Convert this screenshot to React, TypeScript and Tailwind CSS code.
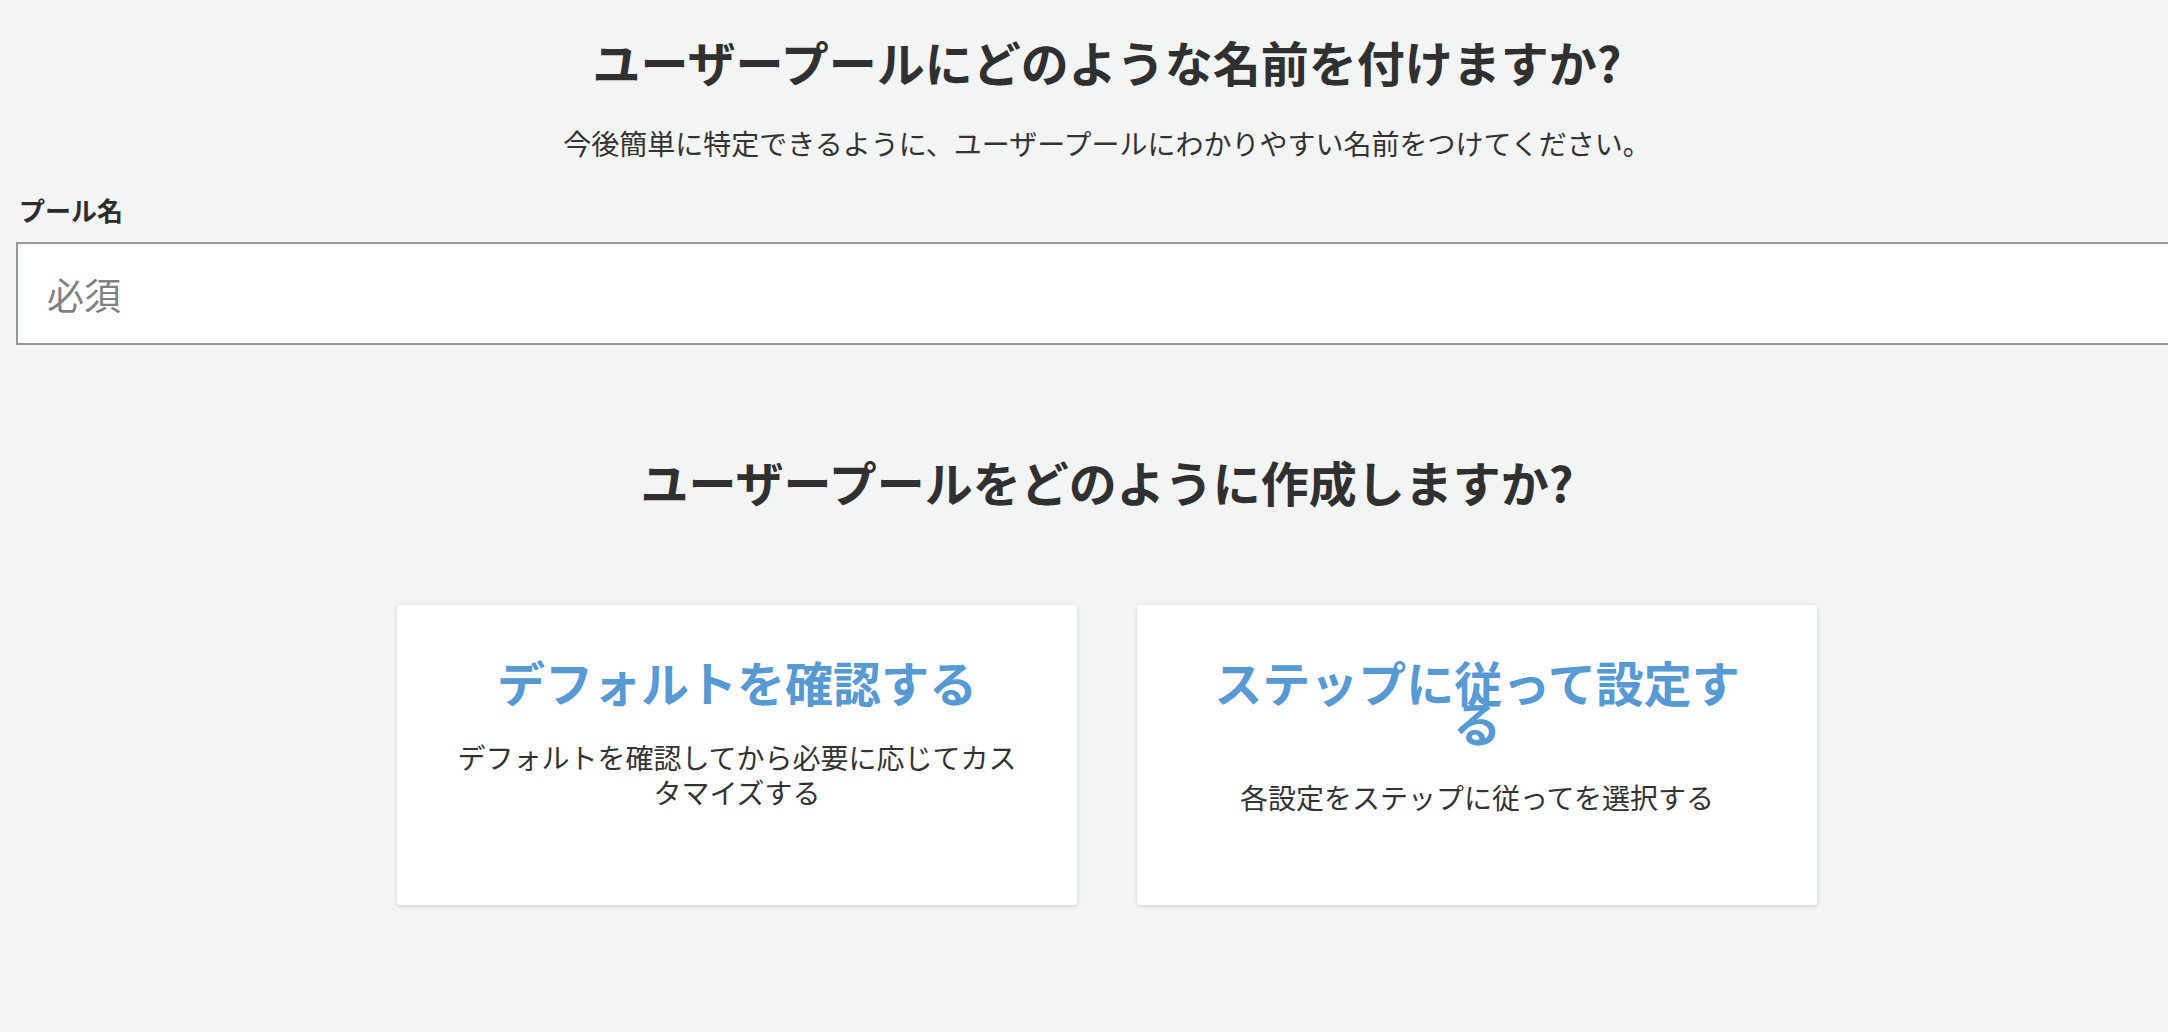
import React from "react";

const font = {
  fontFamily: '"Noto Sans CJK JP", "Noto Sans", sans-serif',
};

function Card({ title, desc }: { title: string; desc: string }) {
  return (
    <div className="w-[680px] h-[300px] bg-white rounded-[3px] shadow-[0_1px_4px_rgba(0,0,0,0.16)] px-[56px] pt-[56px] text-center cursor-pointer">
      <div className="text-[48px] leading-[40px] font-bold text-[#5699d3]">{title}</div>
      <div className="mt-[39px] text-[28px] leading-[35px] text-[#333333]">{desc}</div>
    </div>
  );
}

export default function App() {
  return (
    <div className="w-full min-h-screen overflow-hidden bg-[#f3f4f4]" style={font}>
      <div className="w-[2214px] px-[16px] pb-[60px]">
        <h1 className="pt-[32px] text-center text-[48px] leading-[58px] font-bold text-[#303030]">
          ユーザープールにどのような名前を付けますか?
        </h1>
        <p className="mt-[33px] text-center text-[28px] leading-[40px] text-[#333333]">
          今後簡単に特定できるように、ユーザープールにわかりやすい名前をつけてください。
        </p>
        <label className="block mt-[29px] pl-[3px] text-[26px] leading-[36px] font-bold text-[#2c2c2c]">
          プール名
        </label>
        <input
          type="text"
          placeholder="必須"
          className="block mt-[14px] w-full h-[103px] bg-white border-2 border-[#92979b] pl-[29px] text-[37px] text-[#333] placeholder:text-[#7f8285] outline-none"
          style={font}
        />
        <h2 className="mt-[107px] text-center text-[48px] leading-[58px] font-bold text-[#303030]">
          ユーザープールをどのように作成しますか?
        </h2>
        <div className="mt-[95px] flex justify-center gap-[60px]">
          <Card
            title="デフォルトを確認する"
            desc="デフォルトを確認してから必要に応じてカスタマイズする"
          />
          <Card
            title="ステップに従って設定する"
            desc="各設定をステップに従ってを選択する"
          />
        </div>
      </div>
    </div>
  );
}
